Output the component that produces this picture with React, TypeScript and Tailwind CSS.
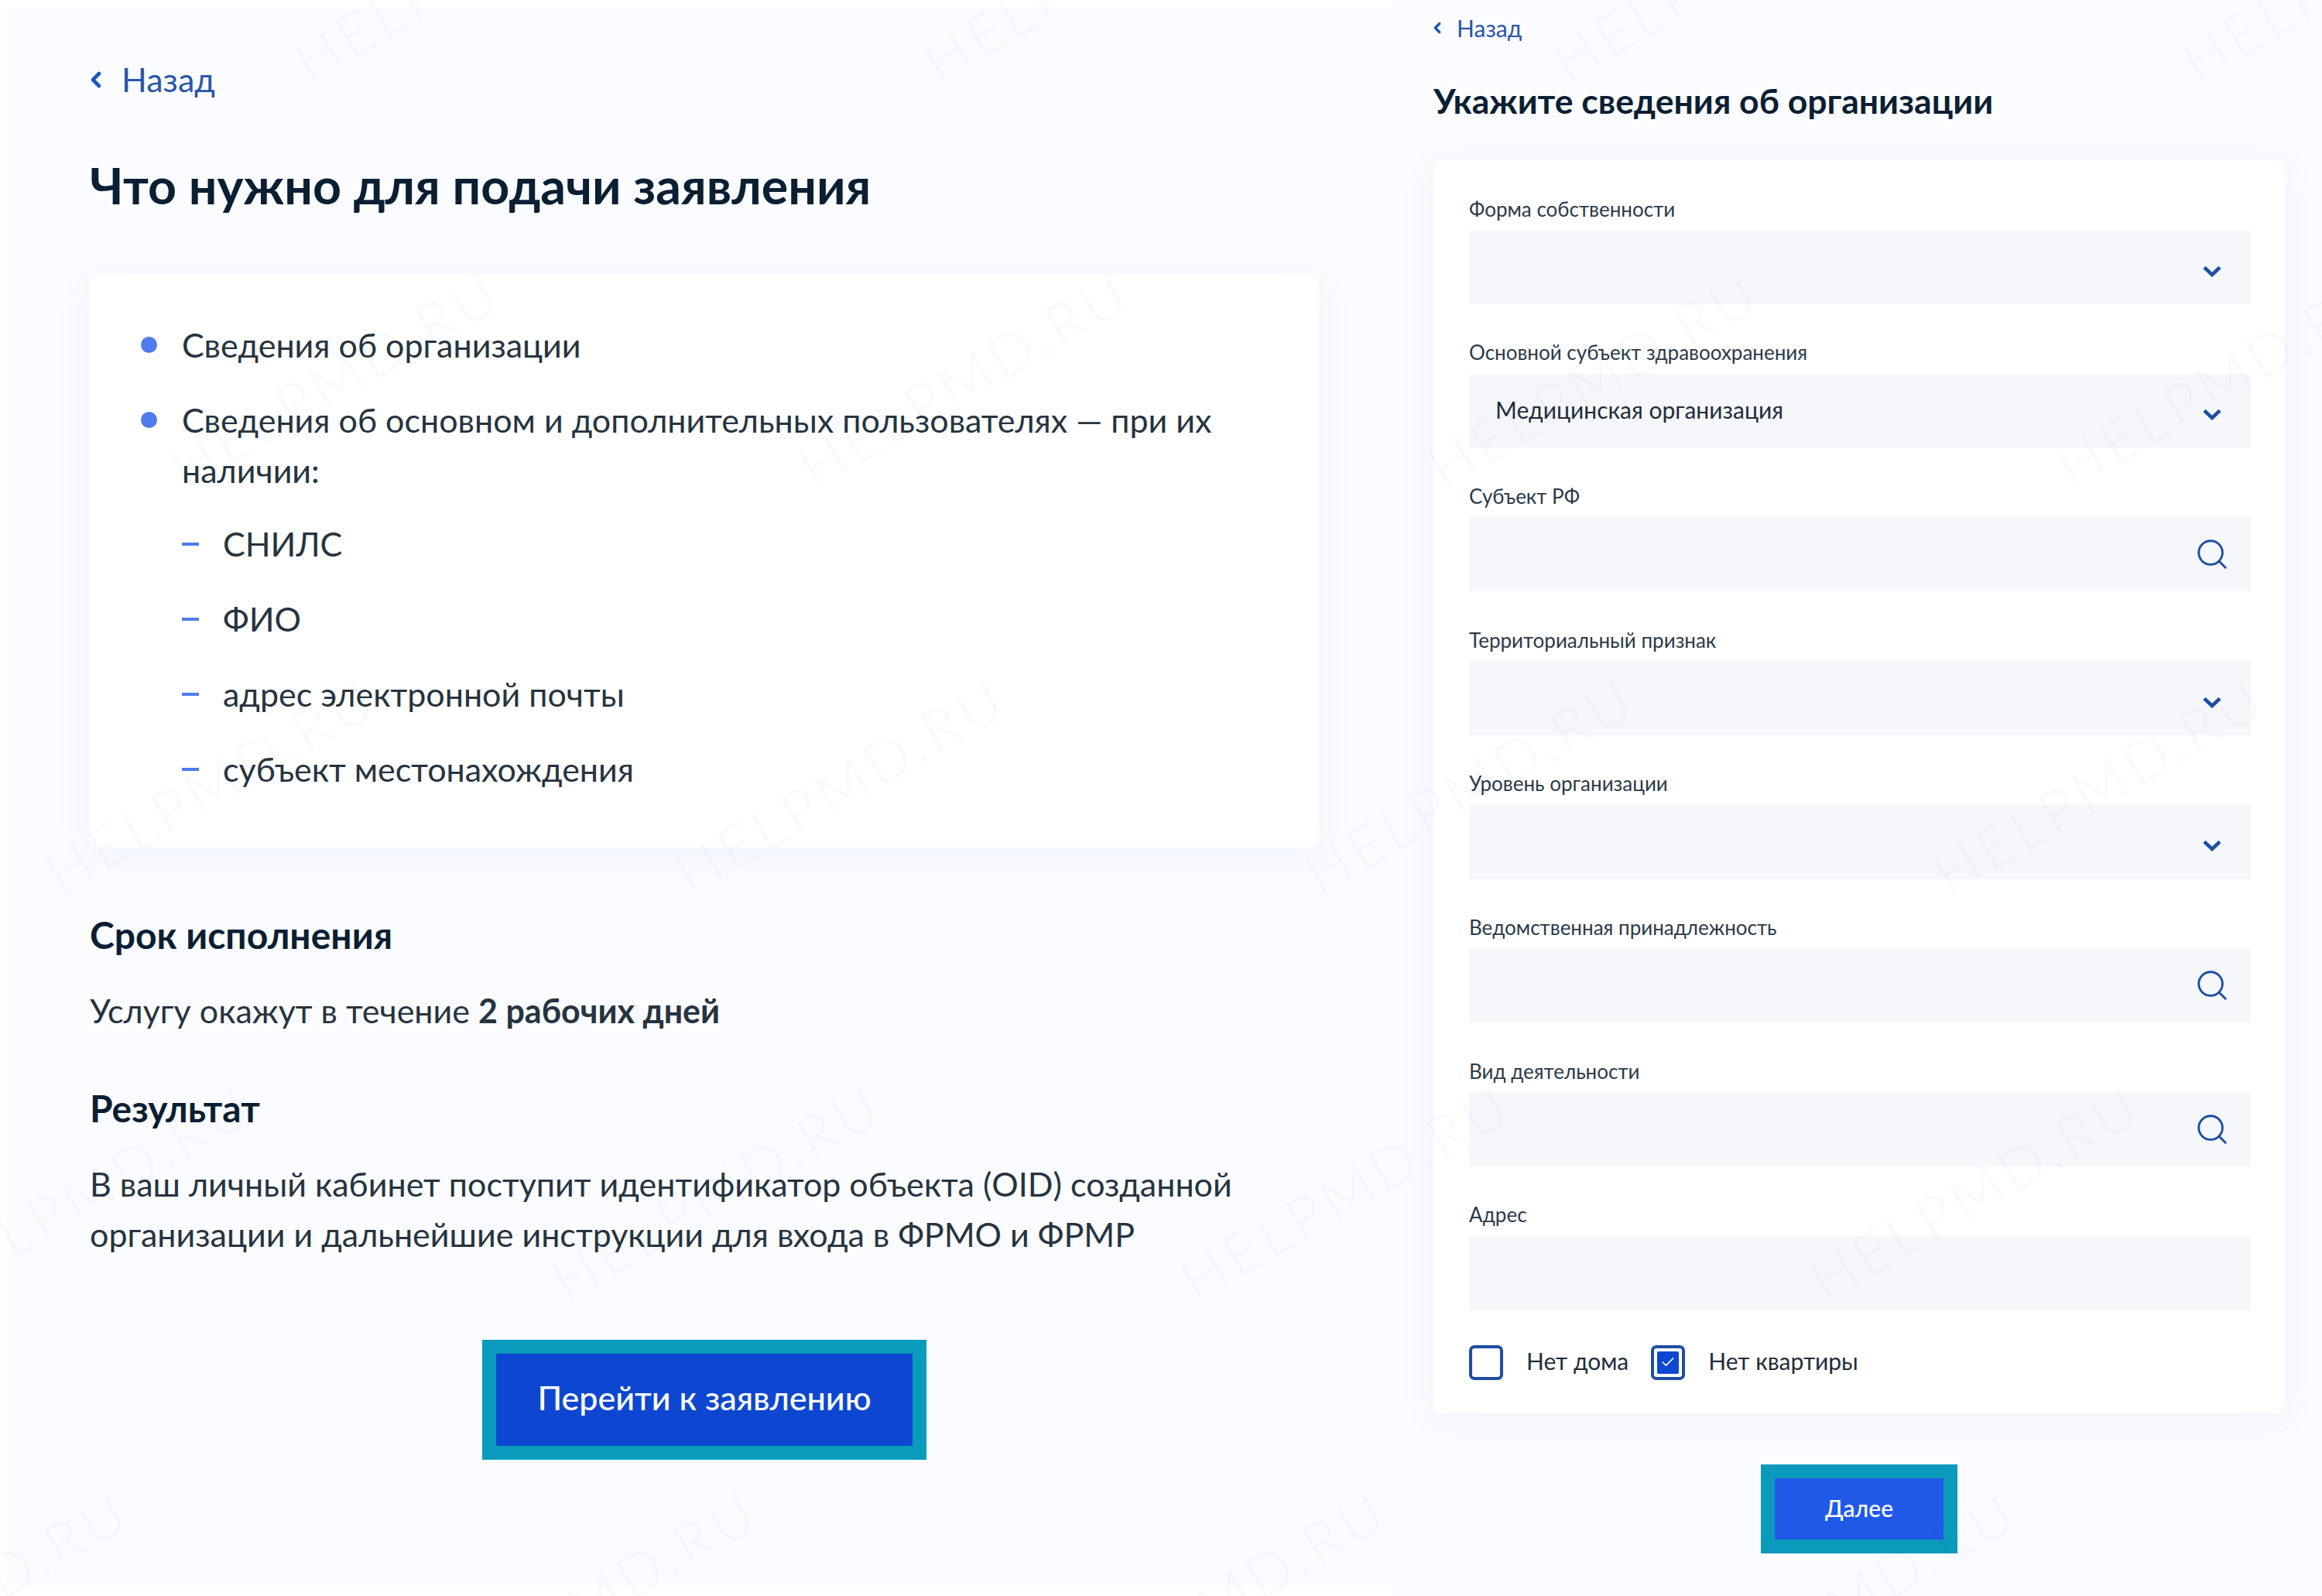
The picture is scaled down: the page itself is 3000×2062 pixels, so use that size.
import { Check, ChevronLeft, Search } from 'lucide-react';

const fields = [
  { label: 'Форма собственности', icon: 'chevron' },
  { label: 'Основной субъект здравоохранения', icon: 'chevron', value: 'Медицинская организация' },
  { label: 'Субъект РФ', icon: 'search' },
  { label: 'Территориальный признак', icon: 'chevron' },
  { label: 'Уровень организации', icon: 'chevron' },
  { label: 'Ведомственная принадлежность', icon: 'search' },
  { label: 'Вид деятельности', icon: 'search' },
  { label: 'Адрес' },
];

const subItems = ['СНИЛС', 'ФИО', 'адрес электронной почты', 'субъект местонахождения'];

// watermark grid, steps taken from the screenshot
const marks: { x: number; y: number }[] = [];
for (let row = 0; row < 5; row++) {
  for (let col = -1; col < 5; col++) {
    marks.push({ x: 385 - row * 160 + col * 813, y: 47 + row * 525 });
  }
}

function Chevron() {
  return (
    <svg width="24" height="15" viewBox="0 0 24 15" fill="none" className="mt-[10px]">
      <path d="M2 2.5 L12 12 L22 2.5" stroke="#1d4ea0" strokeWidth="4.5" />
    </svg>
  );
}

function Field({ label, icon, value }: { label: string; icon?: string; value?: string }) {
  return (
    <div>
      <div className="h-[44px] pb-[10px] flex items-center text-[26px] text-[#2c3a48]">{label}</div>
      <div className="h-[96px] bg-[#f5f7fb] flex items-center justify-between pl-[34px] pr-[38px]">
        <span className="text-[30px] text-[#1f2d3a] -mt-[3px]">{value}</span>
        {icon === 'chevron' && <Chevron />}
        {icon === 'search' && <Search size={46} strokeWidth={1.5} color="#1d4ea0" className="-mr-[11px]" />}
      </div>
    </div>
  );
}

function Checkbox({ label, checked }: { label: string; checked?: boolean }) {
  return (
    <div className="flex items-center">
      <div className="w-[44px] h-[45px] rounded-[7px] border-[4px] border-[#1d4ea0] bg-white p-[4px] flex">
        {checked && (
          <div className="flex-1 bg-[#0d47d1] rounded-[2px] flex items-center justify-center">
            <Check size={20} strokeWidth={2} color="#ffffff" />
          </div>
        )}
      </div>
      <span className="ml-[30px] text-[30px] text-[#1f2d3a] -mt-[3px]">{label}</span>
    </div>
  );
}

export default function App() {
  return (
    <div className="relative w-[3000px] h-[2062px] overflow-hidden bg-white flex font-['Lato','Noto_Sans',sans-serif]">
      {/* left: what is needed */}
      <div className="w-[1790px] ml-[8px] mt-[10px] h-[2040px] bg-[#fbfcff] pl-[108px] pr-[94px] pt-[60px]">
        <a className="flex items-center h-[66px] text-[43px] text-[#2a56a8]">
          <ChevronLeft size={32} strokeWidth={3.5} className="-ml-[8px] mr-[17px]" color="#1d56c0" />
          Назад
        </a>
        <h1 className="mt-[65px] text-[64.5px] leading-[76px] font-bold text-[#0b1f33]">Что нужно для подачи заявления</h1>
        <div className="mt-[78px] h-[740px] bg-white rounded-[12px] shadow-[0_8px_50px_rgba(50,100,220,0.06)] pl-[66px] pr-[100px] pt-[58px] text-[43px] leading-[65px] text-[#26343f]">
          <div className="flex items-center h-[65px]">
            <span className="w-[21px] h-[21px] rounded-full bg-[#4f7bec] mr-[32px]" />
            Сведения об организации
          </div>
          <div className="flex mt-[32px]">
            <span className="w-[21px] h-[21px] rounded-full bg-[#4f7bec] mr-[32px] mt-[22px] shrink-0" />
            <span>Сведения об основном и дополнительных пользователях — при их наличии:</span>
          </div>
          <div className="-mt-[2px]">
            {subItems.map((item) => (
              <div key={item} className="flex items-center h-[65px] mt-[32px] pl-[53px]">
                <span className="w-[22px] h-[4px] bg-[#4f7bec] mr-[31px]" />
                {item}
              </div>
            ))}
          </div>
        </div>
        <h2 className="mt-[80px] text-[48px] leading-[66px] font-bold text-[#0b1f33]">Срок исполнения</h2>
        <p className="mt-[32px] text-[43px] leading-[65px] text-[#26343f]">
          Услугу окажут в течение <b className="font-bold">2 рабочих дней</b>
        </p>
        <h2 className="mt-[61px] text-[48px] leading-[66px] font-bold text-[#0b1f33]">Результат</h2>
        <p className="mt-[32px] text-[43px] leading-[65px] text-[#26343f]">
          В ваш личный кабинет поступит идентификатор объекта (OID) созданной организации и дальнейшие инструкции для входа в ФРМО и ФРМР
        </p>
        <div className="mt-[104px] flex justify-center">
          <button className="w-[574px] h-[155px] border-[18px] border-[#0a9abb] bg-[#0d47d1] text-white text-[43px] font-medium pb-[4px]">
            Перейти к заявлению
          </button>
        </div>
      </div>

      {/* right: organisation form */}
      <div className="flex-1 pl-[54px] pr-[48px] pt-[16px] bg-[#fbfcff]">
        <a className="flex items-center h-[40px] text-[30px] text-[#2a56a8]">
          <ChevronLeft size={22} strokeWidth={3.5} className="-ml-[6px] mr-[14px]" color="#1d56c0" />
          Назад
        </a>
        <h2 className="mt-[44px] text-[44.5px] leading-[60px] font-bold text-[#0b1f33]">Укажите сведения об организации</h2>
        <div className="mt-[47px] h-[1619px] bg-white rounded-[12px] shadow-[0_8px_50px_rgba(50,100,220,0.06)] pl-[46px] pr-[44px] pt-[46px]">
          <div className="flex flex-col gap-[45.7px]">
            {fields.map((f) => (
              <Field key={f.label} label={f.label} icon={f.icon} value={f.value} />
            ))}
          </div>
          <div className="mt-[45px] flex gap-[29px]">
            <Checkbox label="Нет дома" />
            <Checkbox label="Нет квартиры" checked />
          </div>
        </div>
        <div className="mt-[66px] flex justify-center">
          <button className="w-[254px] h-[115px] border-[18px] border-[#0a9abb] bg-[#2059e8] text-white text-[30px] font-medium pb-[3px]">
            Далее
          </button>
        </div>
      </div>

      {/* HELPMD.RU watermark */}
      <div className="absolute inset-0 pointer-events-none overflow-hidden">
        {marks.map((m) => (
          <span
            key={`${m.x}-${m.y}`}
            className="absolute origin-left -rotate-[30deg] text-[74px] leading-none tracking-[7px] font-light whitespace-nowrap text-[#1d3a78]/[0.03]"
            style={{ left: m.x, top: m.y }}
          >
            HELPMD.RU
          </span>
        ))}
      </div>
    </div>
  );
}
